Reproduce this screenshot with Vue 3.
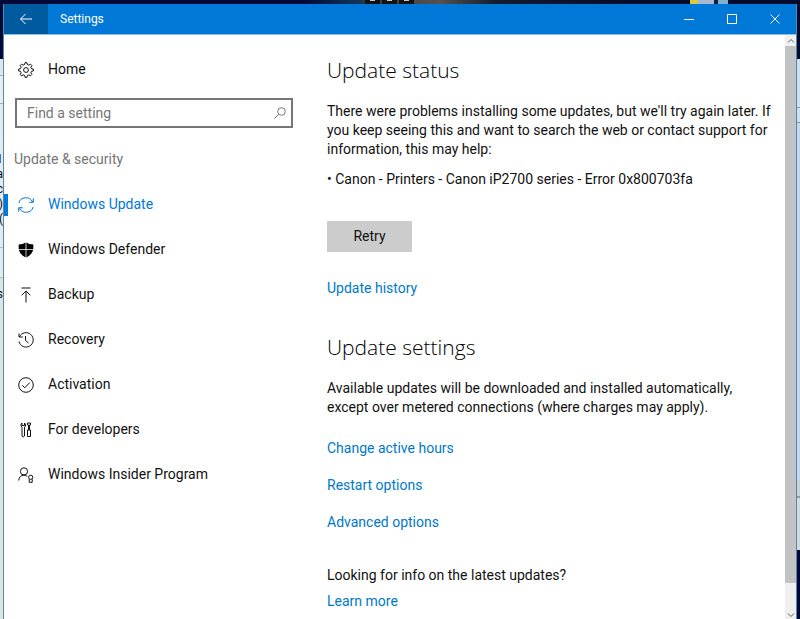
<script setup>
import { ref } from 'vue'

const search = ref('')
const active = ref('Windows Update')

const items = [
  { name: 'Windows Update', icon: 'update' },
  { name: 'Windows Defender', icon: 'defender' },
  { name: 'Backup', icon: 'backup' },
  { name: 'Recovery', icon: 'recovery' },
  { name: 'Activation', icon: 'activation' },
  { name: 'For developers', icon: 'developers' },
  { name: 'Windows Insider Program', icon: 'insider' }
]

const settingLinks = ['Change active hours', 'Restart options', 'Advanced options']
</script>

<template>
  <div class="desktop">
    <div class="top-edge" aria-hidden="true">
      <span class="tiles"><i></i><i></i><i></i></span>
      <span class="picture"></span>
    </div>
    <div class="left-edge" aria-hidden="true">
      <span>1</span>
      <span>a</span>
      <span>c</span>
      <span>)</span>
      <span>(</span>
      <span class="last">s</span>
    </div>

    <div class="window">
      <header class="titlebar">
        <button class="back" aria-label="Back">
          <svg width="14" height="12" viewBox="0 0 14 12">
            <path d="M6.5 1 L1.5 6 L6.5 11 M1.5 6 H13" />
          </svg>
        </button>
        <span class="title">Settings</span>
        <button class="control" aria-label="Minimize">
          <svg width="12" height="12" viewBox="0 0 12 12"><path d="M1 6.5 H11" /></svg>
        </button>
        <button class="control" aria-label="Maximize">
          <svg width="12" height="12" viewBox="0 0 12 12"><path d="M1.5 1.5 H10.5 V10.5 H1.5 Z" /></svg>
        </button>
        <button class="control" aria-label="Close">
          <svg width="12" height="12" viewBox="0 0 12 12"><path d="M1.5 1.5 L10.5 10.5 M10.5 1.5 L1.5 10.5" /></svg>
        </button>
      </header>

      <div class="body">
        <aside class="sidebar">
          <a class="item home" href="#home">
            <svg class="icon" viewBox="0 0 16 16">
              <path d="M6.7 2.5 L7 .7 H9 L9.3 2.5 L10.9 3.2 L12.4 2.1 L13.9 3.6 L12.8 5.1 L13.5 6.7 L15.3 7 V9 L13.5 9.3 L12.8 10.9 L13.9 12.4 L12.4 13.9 L10.9 12.8 L9.3 13.5 L9 15.3 H7 L6.7 13.5 L5.1 12.8 L3.6 13.9 L2.1 12.4 L3.2 10.9 L2.5 9.3 L.7 9 V7 L2.5 6.7 L3.2 5.1 L2.1 3.6 L3.6 2.1 L5.1 3.2 Z" />
              <circle cx="8" cy="8" r="2.4" />
            </svg>
            Home
          </a>

          <label class="search">
            <input v-model="search" type="text" placeholder="Find a setting" aria-label="Find a setting" />
            <svg width="12" height="12" viewBox="0 0 12 12">
              <circle cx="7.5" cy="4.5" r="3.8" />
              <path d="M4.8 7.2 L.5 11.5" />
            </svg>
          </label>

          <p class="group">Update &amp; security</p>

          <nav>
            <a
              v-for="item in items"
              :key="item.name"
              class="item"
              :class="{ active: active === item.name }"
              :href="'#' + item.icon"
              @click="active = item.name"
            >
              <svg class="icon" viewBox="0 0 16 16">
                <g v-if="item.icon === 'update'">
                  <path d="M.8 6 A7.4 7.4 0 0 1 14.6 5 M15.2 10 A7.4 7.4 0 0 1 1.4 11" />
                  <path d="M15.3 1.3 V5.3 H11.3 M.7 14.7 V10.7 H4.7" />
                </g>
                <g v-else-if="item.icon === 'defender'" class="solid">
                  <path d="M7.6 .5 V7.3 H.7 V2.6 Q5 2.6 7.6 .5 Z" />
                  <path d="M8.4 .5 Q11 2.6 15.3 2.6 V7.3 H8.4 Z" />
                  <path d="M.9 8.1 H7.6 V15.4 Q1.8 12.8 .9 8.1 Z" />
                  <path d="M8.4 8.1 H15.1 Q14.2 12.8 8.4 15.4 Z" />
                </g>
                <path v-else-if="item.icon === 'backup'" d="M3.5 1 H12.5 M8 15.5 V4 M3.7 8.3 L8 4 L12.3 8.3" />
                <g v-else-if="item.icon === 'recovery'">
                  <path d="M1.5 4.8 A7.2 7.2 0 1 1 1 9.5" />
                  <path d="M1 1.5 V5 H4.8 M7.5 4 V8.5 L10.5 11" />
                </g>
                <g v-else-if="item.icon === 'activation'">
                  <circle cx="8" cy="8" r="7.3" />
                  <path d="M4.3 8.3 L6.8 10.8 L11.8 5.5" />
                </g>
                <g v-else-if="item.icon === 'developers'">
                  <path d="M4 1 V3.5 H6.5 V1 Q8 2 7.5 4 L6.5 5.2 V14 Q5.2 16 4 14 V5.2 L3 4 Q2.6 2 4 1 Z" />
                  <path d="M9.5 1 H12.5 V3 H11.5 V8 M9.5 1 V3 H10.5 V8 M9.5 8 H12.5 V14.5 H9.5 Z" />
                </g>
                <g v-else>
                  <circle cx="6" cy="4.4" r="3.6" />
                  <path d="M.7 13.5 Q1.2 8.3 6 8.2 Q8 8.2 9.2 9.5" />
                  <circle cx="12.7" cy="10.3" r="2.1" />
                  <path d="M11.2 12.2 V15.3 H14.2 V12.2" />
                </g>
              </svg>
              {{ item.name }}
            </a>
          </nav>
        </aside>

        <main class="content">
          <section>
            <h1>Update status</h1>
            <p>
              There were problems installing some updates, but we'll try again later. If
              you keep seeing this and want to search the web or contact support for
              information, this may help:
            </p>
            <p class="error">• Canon - Printers - Canon iP2700 series - Error 0x800703fa</p>
            <button class="retry">Retry</button>
            <a class="link" href="#history">Update history</a>
          </section>

          <section>
            <h1>Update settings</h1>
            <p>
              Available updates will be downloaded and installed automatically,
              except over metered connections (where charges may apply).
            </p>
            <div class="links">
              <a v-for="link in settingLinks" :key="link" class="link" href="#settings">{{ link }}</a>
            </div>
            <p>Looking for info on the latest updates?</p>
            <a class="link more" href="#more">Learn more</a>
          </section>
        </main>

        <div class="scrollbar" aria-hidden="true">
          <svg width="8" height="6" viewBox="0 0 8 6"><path d="M1 4.5 L4 1.5 L7 4.5" /></svg>
          <div class="thumb"></div>
          <svg width="8" height="6" viewBox="0 0 8 6"><path d="M1 1.5 L4 4.5 L7 1.5" /></svg>
        </div>
      </div>
    </div>

    <div class="right-edge" aria-hidden="true"></div>
  </div>
</template>

<style>
body {
  margin: 0;
}
</style>

<style scoped>
.desktop {
  display: grid;
  grid-template-columns: 3px 1fr 3px;
  grid-template-rows: 4px 1fr;
  min-height: 100vh;
  font-family: Roboto, "Open Sans", sans-serif;
  font-size: 14px;
  line-height: 19px;
  color: #111;
}

.top-edge {
  grid-column: 1 / -1;
  display: flex;
  justify-content: flex-end;
  background: linear-gradient(90deg, #020838 0 38%, #0b3158 44%, #3c4149 48%, #55524f 55%, #101c30 62%, #020b2b 80%);
}

.tiles {
  display: flex;
  gap: 2px;
  margin-right: 276px;
}

.tiles i {
  width: 5px;
  border: solid #111;
  border-width: 0 5px 3px;
  background: #c8c8c8;
}

.picture {
  width: 38px;
  margin-right: 72px;
  background: linear-gradient(90deg, #d8cc45 0 8px, #aab7d0 8px 24px, #10203c 24px 28px, #7fb1d2 28px);
}

.left-edge {
  display: flex;
  flex-direction: column;
  align-items: flex-end;
  padding-top: 148px;
  overflow: hidden;
  font-size: 12px;
  line-height: 15px;
  background: linear-gradient(#020838 0 55px, #e3e6e8 55px 71px, #aaa 71px 72px, #eceeee 72px 99px, #aaa 99px 100px, #e8eaea 100px 243px, #bbb 243px 244px, #e8eaea 244px 273px, #bbb 273px 274px, #e3e3dd 274px);
}

.left-edge .last {
  margin-top: 60px;
}

.right-edge {
  background: linear-gradient(#020b2b 0 55px, #d4dee9 55px 103px, #8899a8 103px 104px, #d4dee9 104px 118px, #8899a8 118px 119px, #c7d7e8 119px 476px, #cbd1d6 476px 492px, #909a9f 492px 494px, #d5d9dc 494px 546px, #010635 546px);
}

.window {
  display: flex;
  flex-direction: column;
  border: solid #4b8bb5;
  border-width: 0 1px;
  background: #fff;
}

.titlebar {
  display: flex;
  align-items: center;
  height: 30px;
  background: #0078d7;
  border-bottom: 1px solid #8fc1e8;
  color: #fff;
}

.titlebar button {
  display: flex;
  align-items: center;
  justify-content: center;
  align-self: stretch;
  padding: 0;
  border: none;
  background: none;
  color: #fff;
}

.titlebar .back {
  width: 44px;
  background: #005a9e;
}

.titlebar .control {
  width: 43px;
}

.title {
  flex: 1;
  padding-left: 12px;
  font-size: 12px;
}

svg {
  flex: none;
  fill: none;
  stroke: currentColor;
  stroke-width: 1;
}

.body {
  flex: 1;
  display: flex;
}

.sidebar {
  flex: 0 0 289px;
  padding-top: 12px;
}

.item {
  display: flex;
  align-items: center;
  gap: 14px;
  height: 45px;
  padding-left: 14px;
  color: #111;
  text-decoration: none;
}

.icon {
  width: 16px;
  height: 16px;
}

.solid {
  fill: #000;
  stroke: none;
}

.item.active {
  color: #0078d7;
  background: linear-gradient(#0078d7, #0078d7) left center / 4px 22px no-repeat;
}

.search {
  display: flex;
  align-items: center;
  box-sizing: border-box;
  height: 30px;
  margin: 6px 0 0 11px;
  padding: 0 5px 0 10px;
  border: 2px solid #767676;
  color: #767676;
}

.search input {
  flex: 1;
  min-width: 0;
  padding: 0;
  border: none;
  outline: none;
  background: none;
  font: inherit;
  color: #111;
}

.search input::placeholder {
  color: #767676;
  opacity: 1;
}

.group {
  margin: 22px 0 13px 10px;
  color: #767676;
}

.content {
  flex: 1;
  min-width: 0;
  padding: 21px 8px 8px 34px;
}

h1 {
  margin: 0 0 18px;
  font-family: "Open Sans", sans-serif;
  font-size: 21px;
  font-weight: 300;
  line-height: 28px;
  color: #000;
}

p {
  margin: 0;
}

.error {
  margin-top: 11px;
}

.retry {
  display: block;
  width: 85px;
  height: 31px;
  margin: 32px 0 27px;
  border: none;
  background: #ccc;
  font: inherit;
  color: #111;
}

.link {
  color: #0078c8;
  text-decoration: none;
}

section + section {
  margin-top: 35px;
}

.links {
  display: flex;
  flex-direction: column;
  align-items: flex-start;
  gap: 18px;
  margin: 22px 0 34px;
}

.more {
  display: inline-block;
  margin-top: 7px;
}

.scrollbar {
  display: flex;
  flex-direction: column;
  align-items: center;
  width: 11px;
  padding: 3px 0 1px;
  background: #f0f0f0;
  color: #606060;
}

.thumb {
  flex: 1;
  align-self: stretch;
  margin: 2px 0 29px;
  background: #c2c3c4;
}
</style>
